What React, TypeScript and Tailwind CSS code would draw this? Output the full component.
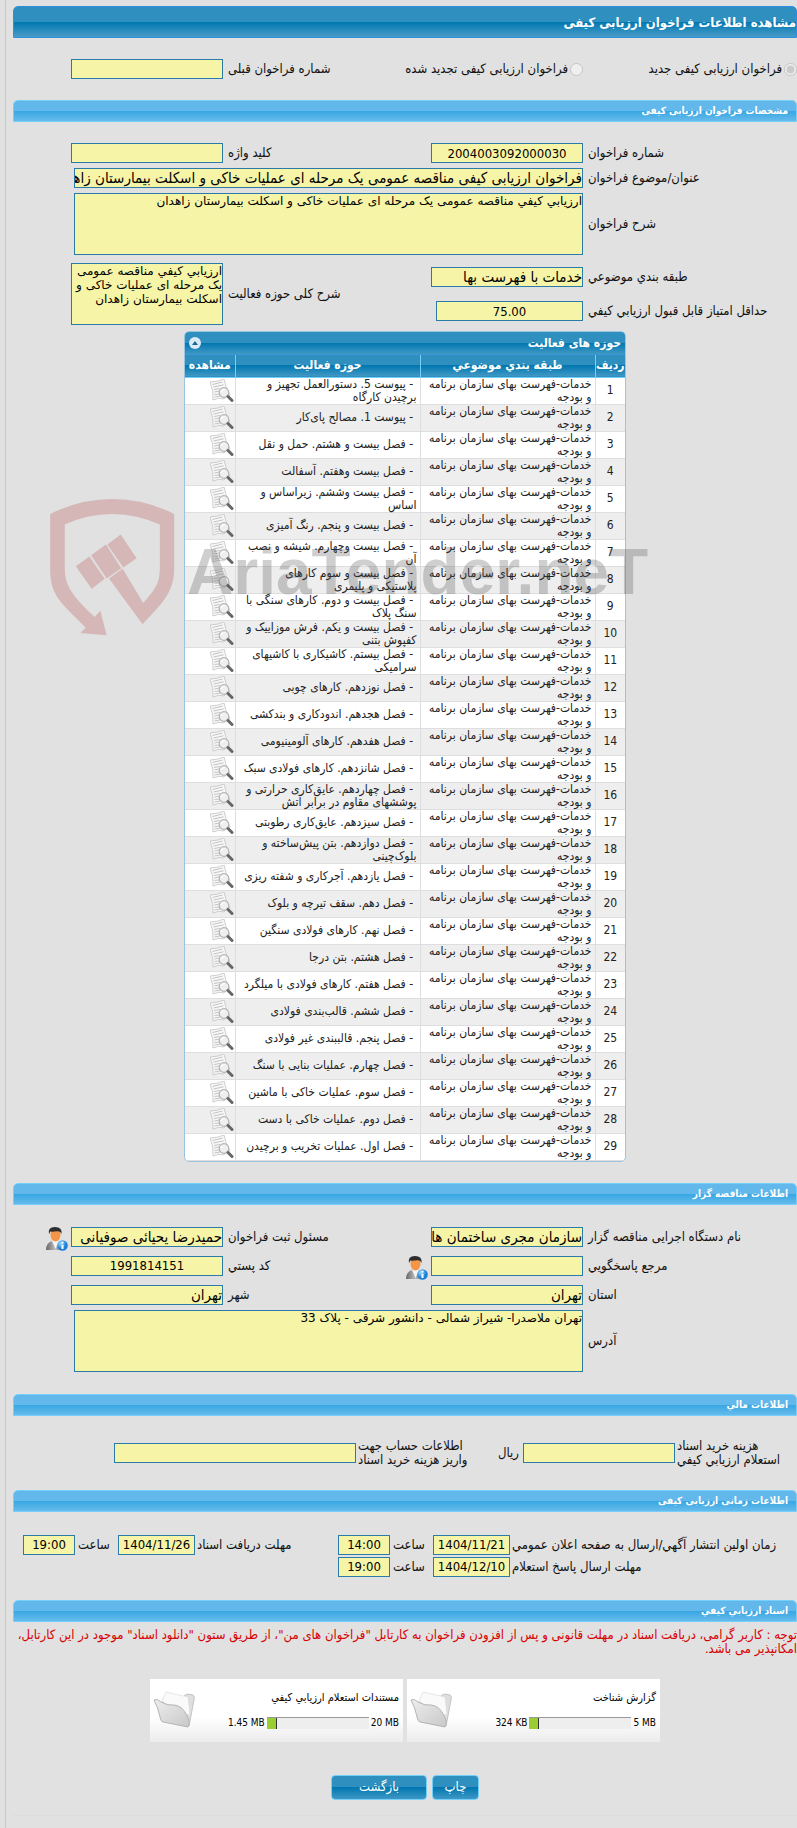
import type { ReactNode } from "react";

const CATEGORY = "خدمات-فهرست بهای سازمان برنامه و بودجه";

const ACTIVITIES = [
  "پیوست 5. دستورالعمل تجهیز و برچیدن کارگاه",
  "پیوست 1. مصالح پای‌کار",
  "فصل بیست و هشتم. حمل و نقل",
  "فصل بیست وهفتم. آسفالت",
  "فصل بیست وششم. زیراساس و اساس",
  "فصل بیست و پنجم. رنگ آمیزی",
  "فصل بیست وچهارم. شیشه و نصب آن",
  "فصل بیست و سوم کارهای\nپلاستیکی و پلیمری",
  "فصل بیست و دوم. کارهای سنگی با سنگ پلاک",
  "فصل بیست و یکم. فرش موزاییک و کفپوش بتنی",
  "فصل بیستم. کاشیکاری با کاشیهای سرامیکی",
  "فصل نوزدهم. کارهای چوبی",
  "فصل هجدهم. اندودکاری و بندکشی",
  "فصل هفدهم. کارهای آلومینیومی",
  "فصل شانزدهم. کارهای فولادی سبک",
  "فصل چهاردهم. عایق‌کاری حرارتی و پوششهای مقاوم در برابر آتش",
  "فصل سیزدهم. عایق‌کاری رطوبتی",
  "فصل دوازدهم. بتن پیش‌ساخته و بلوک‌چینی",
  "فصل یازدهم. آجرکاری و شفته ریزی",
  "فصل دهم. سقف تیرچه و بلوک",
  "فصل نهم. کارهای فولادی سنگین",
  "فصل هشتم. بتن درجا",
  "فصل هفتم. کارهای فولادی با میلگرد",
  "فصل ششم. قالب‌بندی فولادی",
  "فصل پنجم. قالببندی غیر فولادی",
  "فصل چهارم. عملیات بنایی با سنگ",
  "فصل سوم. عملیات خاکی با ماشین",
  "فصل دوم. عملیات خاکی با دست",
  "فصل اول. عملیات تخریب و برچیدن",
];

const BOX = "block border border-[#2a7ba8] bg-[#f6f4a6] text-black outline-none";
const FORM = "grid grid-cols-[209px_152px_1fr_152px] items-center gap-x-[5px] pl-[58px]";
const DARK = "bg-[linear-gradient(#2f90bf_50%,#0077b0_50%,#3f98c4)]";

function Field({ id, value = "", numeric, className = "" }: { id: string; value?: string; numeric?: boolean; className?: string }) {
  return (
    <input id={id} readOnly defaultValue={value}
      className={`${BOX} h-5 ${numeric ? "text-center text-[13px]" : "text-[15px]"} ${className}`} />
  );
}

function Area({ id, value, className = "" }: { id: string; value: string; className?: string }) {
  return (
    <textarea id={id} readOnly defaultValue={value}
      className={`${BOX} h-[62px] resize-none overflow-hidden font-['DejaVu_Sans',sans-serif] text-xs leading-[14px] ${className}`} />
  );
}

function Label({ id, children, className = "" }: { id: string; children: ReactNode; className?: string }) {
  return <label htmlFor={id} className={`text-left ${className}`}>{children}</label>;
}

function Bar({ children }: { children: ReactNode }) {
  return (
    <h2 className="h-[22px] rounded-t-[5px] border border-[#74d0fa] bg-[linear-gradient(#62b8ea_50%,#37a6e2_50%,#66bbec)] pr-2 text-[10px] leading-5 font-bold text-white">
      {children}
    </h2>
  );
}

function PreviewIcon() {
  return (
    <svg viewBox="0 0 24 24" className="size-6">
      <path d="M0 3 Q7 3 14 0 Q15 7 20 16 Q16 16 14 20 Q9 18 3 21 Q4 12 0 3Z" fill="#f7f7f7" stroke="#c4c4c4" strokeWidth=".8" />
      <path d="M2.500 5.500 L12.500 3 M3.500 8 L13.500 5.800 M4 10.500 L10 9.500 M4.500 13 L9 12 M4.500 15.500 L9 15 M4.500 18 L10 17" stroke="#bdbdbd" strokeWidth=".9" />
      <circle cx="14" cy="13.500" r="4.800" fill="#ededed" fillOpacity=".9" stroke="#b4b4b4" strokeWidth="1.200" />
      <path d="M11 13 Q12 10.500 14.500 10.500" fill="none" stroke="#fff" strokeWidth="1.200" />
      <path d="M18 17.500 L22 21.500" stroke="#666" strokeWidth="3" strokeLinecap="round" />
    </svg>
  );
}

function PersonIcon() {
  return (
    <svg viewBox="0 0 22 24" className="h-6 w-[22px]">
      <defs>
        <linearGradient id="suit" x2="1" y2="0"><stop stopColor="#666" /><stop offset=".5" stopColor="#bbb" /><stop offset="1" stopColor="#777" /></linearGradient>
        <radialGradient id="info" cx=".35" cy=".3"><stop stopColor="#9edcff" /><stop offset="1" stopColor="#1a80d8" /></radialGradient>
      </defs>
      <path d="M0 23 Q0 16 6 14 H13 Q18 16 18 23Z" fill="url(#suit)" />
      <path d="M6 14 L9.500 22 L13 14Z" fill="#f4f4f4" />
      <ellipse cx="9.500" cy="8" rx="5" ry="6.500" fill="#f59547" />
      <path d="M3 7 Q1.500 0 9 0 Q16.500 0 15.500 7 Q14.500 4 11.500 4.300 Q6 5 4 4.500 Q4 6 3 7Z" fill="#2d2d2d" />
      <circle cx="16.500" cy="18.500" r="5.300" fill="url(#info)" />
      <path d="M16.500 14.800 V16.500 M16.500 17.700 V22" stroke="#fff" strokeWidth="2" />
    </svg>
  );
}

function FolderIcon() {
  return (
    <svg viewBox="0 0 42 38" className="h-[38px] w-[42px]">
      <defs>
        <linearGradient id="folder" x2="1" y2="1"><stop stopColor="#eee" /><stop offset="1" stopColor="#c8c8c8" /></linearGradient>
      </defs>
      <path d="M9 12 L12 5 L28 8 Q32 3 35 3 L40 4 Q42 5 41 9 L36 35 L20 30Z" fill="#dedede" stroke="#c4c4c4" />
      <path d="M9 10 L13 1 L35 6 L37 24 L31 23 L14 14Z" fill="#fafafa" stroke="#ddd" strokeWidth=".7" />
      <path d="M1 9 Q4 7 8 11 Q15 15 21 14 Q30 15 34 25 Q38 31 35 36 L10 31 Q8 31 7 26 Q5 16 1 9Z" fill="url(#folder)" stroke="#b4b4b4" />
    </svg>
  );
}

function Watermark() {
  return (
    <div dir="ltr" aria-hidden="true" className="pointer-events-none absolute top-[168px] left-[37px] flex items-start gap-3">
      <svg viewBox="150 60 375 412" className="h-[137px] w-[125px] shrink-0" fill="#b53d3d" opacity=".25">
        <path d="M320 470 L241 463 L257 447 C180 370 150 350 150 270 V105 Q240 60 337 60 T523 105 V270 C523 345 480 380 428 437 L327 299 L368 270 L430 373 C472 325 480 310 480 260 V137 Q410 105 337 105 Q260 105 194 137 V270 C194 325 225 360 284 415 L301 396Z" />
        <path d="M273 229 L318 197 L364 268 L320 299Z M227 262 L268 233 L314 300 L275 330Z M322 197 L362 167 L410 238 L370 266Z" />
      </svg>
      <span className="mt-7 font-['Liberation_Sans',sans-serif] text-[64px] leading-[90px] font-bold text-[#444] opacity-25">AriaTender.neT</span>
    </div>
  );
}

function ActivityTable() {
  return (
    <section className="relative">
      <div className="mx-auto w-[442px] overflow-hidden rounded-[5px] border border-[#9cc3e0] bg-white">
        <div className={`${DARK} flex h-[23px] items-center justify-between border-b border-[#3b97d8] px-1 text-xs font-bold text-white`}>
          <h3>حوزه های فعالیت</h3>
          <button aria-label="بستن" className="flex size-3 items-center justify-center rounded-full bg-[#dceaf8]">
            <svg viewBox="0 0 6 4" className="h-1 w-1.5"><path d="M0 4 L3 0 L6 4Z" fill="#17689c" /></svg>
          </button>
        </div>
        <table className="w-full table-fixed border-collapse text-xs leading-[13px] text-[#222]">
          <thead>
            <tr className={`${DARK} h-[22px] border-b border-[#74d0fa] text-white`}>
              <th className="w-[30px]">ردیف</th>
              <th className="w-[175px] border-r border-[#74d0fa]">طبقه بندي موضوعي</th>
              <th className="w-[185px] border-r border-[#74d0fa]">حوزه فعالیت</th>
              <th className="border-r border-[#74d0fa]">مشاهده</th>
            </tr>
          </thead>
          <tbody>
            {ACTIVITIES.map((name, i) => (
              <tr key={name} className="h-[27px] border-b border-[#dedede] even:bg-[#eee]">
                <td className="text-center">{i + 1}</td>
                <td className="border-r border-[#dedede] px-[3px]">{CATEGORY}</td>
                <td className="border-r border-[#dedede] px-[3px] whitespace-pre-line">&nbsp;- {name}</td>
                <td className="border-r border-[#dedede] pr-px">
                  <button aria-label="مشاهده" className="block"><PreviewIcon /></button>
                </td>
              </tr>
            ))}
          </tbody>
        </table>
      </div>
      <Watermark />
    </section>
  );
}

function FileCard({ title, used, total, percent }: { title: string; used: string; total: string; percent: number }) {
  return (
    <div className="flex h-[63px] w-[253px] items-center justify-between bg-linear-to-b from-white from-60% to-[#ececec] pr-[4px] pl-[3px]">
      <div className="flex flex-col gap-3">
        <span className="text-[11px] leading-[14px] text-black">{title}</span>
        <div dir="ltr" className="flex items-center justify-end gap-0.5 text-[10px] leading-3 text-black">
          <span>{used}</span>
          <div className="h-3 w-[102px] border-t border-[#999] bg-[#eee]">
            <div className="h-full border-r border-[#333] bg-[#9acd32]" style={{ width: `${percent}%` }} />
          </div>
          <span>{total}</span>
        </div>
      </div>
      <FolderIcon />
    </div>
  );
}

export default function App() {
  return (
    <div dir="rtl" className="min-h-screen bg-[#e1e1e1] pl-[5px] font-['DejaVu_Sans_Condensed','DejaVu_Sans',sans-serif] text-[13px] leading-[14px] text-[#111]">
      <main className="min-h-screen border-l border-[#c8c8c8] pt-[6px] pl-[7px]">
        <h1 className="h-8 rounded-t-[5px] border border-[#2d8fdd] bg-[linear-gradient(#2f90bf_50%,#0077b0_50%,#4a9cc8)] leading-8 font-bold text-white">
          مشاهده اطلاعات فراخوان ارزیابی کیفی
        </h1>

        <div className={`${FORM} py-[21px]`}>
          <label className="flex items-center gap-0.5"><input type="radio" name="kind" disabled defaultChecked />فراخوان ارزیابی کیفی جدید</label>
          <label className="flex items-center gap-0.5 whitespace-nowrap"><input type="radio" name="kind" disabled />فراخوان ارزیابی کیفی تجدید شده</label>
          <Label id="prev">شماره فراخوان قبلی</Label>
          <Field id="prev" />
        </div>

        <Bar>مشخصات فراخوان ارزیابی کیفی</Bar>
        <div className={`${FORM} gap-y-[5px] pt-[21px] pb-[7px]`}>
          <Label id="number">شماره فراخوان</Label>
          <Field id="number" value="2004003092000030" numeric />
          <Label id="keyword">کلید واژه</Label>
          <Field id="keyword" />
          <Label id="subject">عنوان/موضوع فراخوان</Label>
          <Field id="subject" value="فراخوان ارزیابی کیفی مناقصه عمومی یک مرحله ای عملیات خاکی و اسکلت بیمارستان زاهدان" className="col-span-3 ml-[3px]" />
          <Label id="about">شرح فراخوان</Label>
          <Area id="about" value="ارزيابي کيفي مناقصه عمومی یک مرحله ای عملیات خاکی و اسکلت بیمارستان زاهدان" className="col-span-3 ml-[3px]" />
        </div>
        <div className={`${FORM} grid-rows-[30px_30px] gap-y-1 pb-[5px]`}>
          <Label id="class">طبقه بندي موضوعي</Label>
          <Field id="class" value="خدمات با فهرست بها" />
          <Label id="scope" className="row-span-2">شرح کلی حوزه فعالیت</Label>
          <Area id="scope" value="ارزيابي کيفي مناقصه عمومی یک مرحله ای عملیات خاکی و اسکلت بیمارستان زاهدان" className="row-span-2" />
          <Label id="score">حداقل امتیاز قابل قبول ارزيابي کيفي</Label>
          <Field id="score" value="75.00" numeric className="ml-[5px]" />
        </div>

        <ActivityTable />

        <div className="pt-[21px]"><Bar>اطلاعات مناقصه گزار</Bar></div>
        <div className={`${FORM} gap-y-[5px] pt-[22px] pb-[22px]`}>
          <Label id="org">نام دستگاه اجرایی مناقصه گزار</Label>
          <Field id="org" value="سازمان مجری ساختمان ها" />
          <Label id="owner">مسئول ثبت فراخوان</Label>
          <div className="relative">
            <Field id="owner" value="حمیدرضا یحیائی صوفیانی" className="w-full" />
            <button aria-label="مسئول ثبت فراخوان" className="absolute top-0 right-full mr-[3px]"><PersonIcon /></button>
          </div>
          <Label id="contact">مرجع پاسخگويي</Label>
          <div className="relative my-1">
            <Field id="contact" className="w-full" />
            <button aria-label="مرجع پاسخگويي" className="absolute top-0 right-full mr-[3px]"><PersonIcon /></button>
          </div>
          <Label id="zip">کد پستي</Label>
          <Field id="zip" value="1991814151" numeric />
          <Label id="province">استان</Label>
          <Field id="province" value="تهران" />
          <Label id="city">شهر</Label>
          <Field id="city" value="تهران" />
          <Label id="address">آدرس</Label>
          <Area id="address" value="تهران ملاصدرا- شیراز شمالی - دانشور شرقی - پلاک 33" className="col-span-3 ml-[3px]" />
        </div>

        <Bar>اطلاعات مالي</Bar>
        <div className="flex items-center gap-0.5 py-[23px]">
          <Label id="fee" className="w-[120px] whitespace-nowrap">هزینه خرید اسناد<br />استعلام ارزيابي کيفي</Label>
          <Field id="fee" className="w-[152px]" />
          <span className="w-[51px] pr-0.5">ریال</span>
          <Label id="account" className="w-[110px] whitespace-nowrap">اطلاعات حساب جهت<br />واریز هزینه خرید اسناد</Label>
          <Field id="account" className="w-[242px]" />
        </div>

        <Bar>اطلاعات زمانی ارزیابی کیفی</Bar>
        <div className="grid grid-cols-[287px_77px_43px_52px_1fr_77px_43px_52px] items-center gap-y-0.5 py-[23px] pl-[10px]">
          <Label id="publish" className="pl-0.5 whitespace-nowrap">زمان اولین انتشار آگهي/ارسال به صفحه اعلان عمومي</Label>
          <Field id="publish" value="1404/11/21" numeric />
          <Label id="publishHour" className="pl-[3px]">ساعت</Label>
          <Field id="publishHour" value="14:00" numeric />
          <Label id="receive" className="pl-0.5">مهلت دریافت اسناد</Label>
          <Field id="receive" value="1404/11/26" numeric />
          <Label id="receiveHour" className="pl-[3px]">ساعت</Label>
          <Field id="receiveHour" value="19:00" numeric />
          <Label id="reply" className="pl-0.5">مهلت ارسال پاسخ استعلام</Label>
          <Field id="reply" value="1404/12/10" numeric />
          <Label id="replyHour" className="pl-[3px]">ساعت</Label>
          <Field id="replyHour" value="19:00" numeric />
        </div>

        <Bar>اسناد ارزيابي کيفي</Bar>
        <p className="pt-[6px] text-[#d90000]">
          توجه : کاربر گرامی، دریافت اسناد در مهلت قانونی و پس از افزودن فراخوان به کارتابل "فراخوان های من"، از طریق ستون "دانلود اسناد" موجود در این کارتابل، امکانپذیر می باشد.
        </p>
        <div className="flex justify-center gap-1 pt-[23px]">
          <FileCard title="گزارش شناخت" used="324 KB" total="5 MB" percent={9} />
          <FileCard title="مستندات استعلام ارزيابي کيفي" used="1.45 MB" total="20 MB" percent={10} />
        </div>
        <div className="flex justify-center gap-[5px] pt-[33px] text-white">
          <button className={`${DARK} h-[25px] w-[47px] rounded-[4px] border border-[#74d0fa]`}>چاپ</button>
          <button className={`${DARK} h-[25px] w-24 rounded-[4px] border border-[#74d0fa]`}>بازگشت</button>
        </div>
        <hr className="mt-[15px] border-[#dcdcdc]" />
      </main>
    </div>
  );
}
